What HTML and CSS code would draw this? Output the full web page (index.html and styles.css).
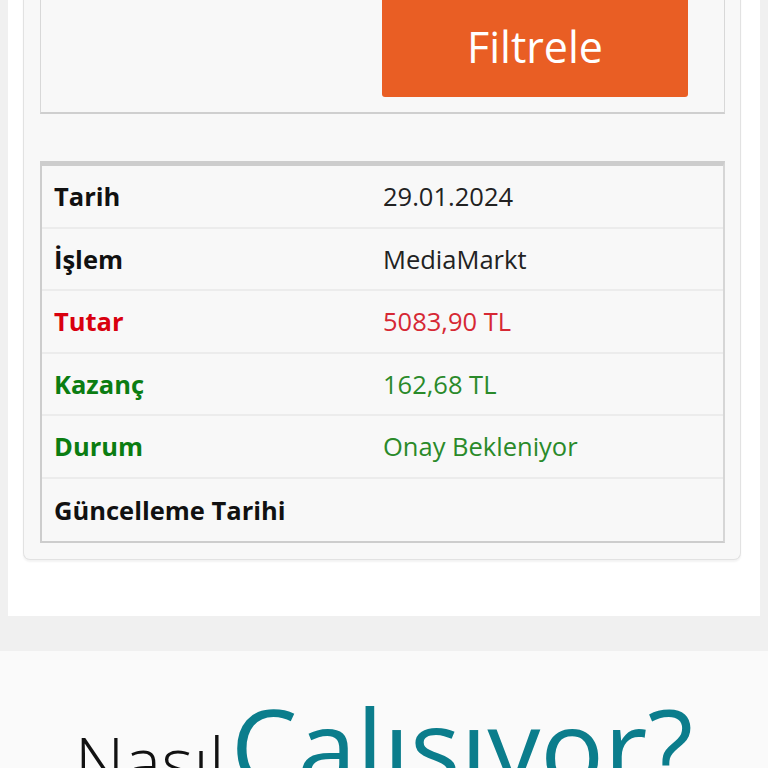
FILE: index.html
```html
<!DOCTYPE html>
<html lang="tr">
<head>
<meta charset="utf-8">
<link rel="stylesheet" href="styles.css">
</head>
<body>
<div class="page">
  <div class="wrap">
    <div class="panel">
      <div class="filter">
        <button class="btn">Filtrele</button>
      </div>
      <div class="table">
        <div class="row"><div class="lbl">Tarih</div><div class="val">29.01.2024</div></div>
        <div class="row"><div class="lbl">İşlem</div><div class="val">MediaMarkt</div></div>
        <div class="row red"><div class="lbl">Tutar</div><div class="val">5083,90 TL</div></div>
        <div class="row green"><div class="lbl">Kazanç</div><div class="val">162,68 TL</div></div>
        <div class="row green"><div class="lbl">Durum</div><div class="val">Onay Bekleniyor</div></div>
        <div class="row last"><div class="lbl">Güncelleme Tarihi</div><div class="val"></div></div>
      </div>
    </div>
  </div>
  <div class="how">
    <h2 class="title"><span class="t1">Nasıl</span> <span class="t2">Çalışıyor?</span></h2>
  </div>
</div>
</body>
</html>
```
FILE: styles.css
```css
html, body {
  margin: 0;
  padding: 0;
  background: #f0f0f0;
  font-family: "Open Sans", "Liberation Sans", sans-serif;
  overflow: hidden;
}
.page {
  margin-top: -20px;
}
.wrap {
  margin: 0 8px;
  background: #fff;
  padding: 0 19px 56px 15px;
}
.panel {
  background: #f8f8f8;
  border: 1px solid #e2e2e2;
  border-top: none;
  border-radius: 0 0 7px 7px;
  box-shadow: 0 2px 2px rgba(0,0,0,0.05);
  padding: 0 15px 16px 16px;
}
.filter {
  display: flex;
  justify-content: flex-end;
  background: #f8f8f8;
  border: 1px solid #d8d8d8;
  border-top: none;
  border-bottom: 2px solid #cfcfcf;
  padding: 0 36px 15px 0;
}
.btn {
  width: 306px;
  height: 117px;
  background: #e95e24;
  color: #fff;
  border: none;
  border-radius: 0 0 3px 3px;
  font-family: "Open Sans", sans-serif;
  font-size: 43px;
  padding: 16px 0 0;
  margin: 0;
}
.table {
  margin-top: 47px;
  background: #f8f8f8;
  border-top: 5px solid #cdcdcd;
  border-left: 2px solid #cdcdcd;
  border-right: 2px solid #d6d6d6;
  border-bottom: 2px solid #cdcdcd;
}
.row {
  display: grid;
  grid-template-columns: 341px 1fr;
  height: 62.5px;
  align-items: center;
  border-bottom: 2px solid #ececec;
  box-sizing: border-box;
  font-size: 25.5px;
  color: #222;
}
.row.last {
  border-bottom: none;
}
.lbl {
  padding-left: 12px;
  font-weight: 700;
  color: #111;
}
.row.red .lbl { color: #d9000f; }
.row.red .val { color: #d62834; }
.row.green .lbl { color: #0b7d12; }
.row.green .val { color: #2a8a2a; }
.how {
  margin-top: 35px;
  background: #fafafa;
  height: 200px;
}
.title {
  margin: 0;
  padding-top: 42px;
  text-align: center;
  font-weight: 300;
  line-height: 1;
  white-space: nowrap;
}
.t1 {
  font-size: 69px;
  color: #111;
  font-weight: 300;
}
.t2 {
  font-size: 106px;
  color: #0b7d8c;
  font-weight: 400;
}
```
